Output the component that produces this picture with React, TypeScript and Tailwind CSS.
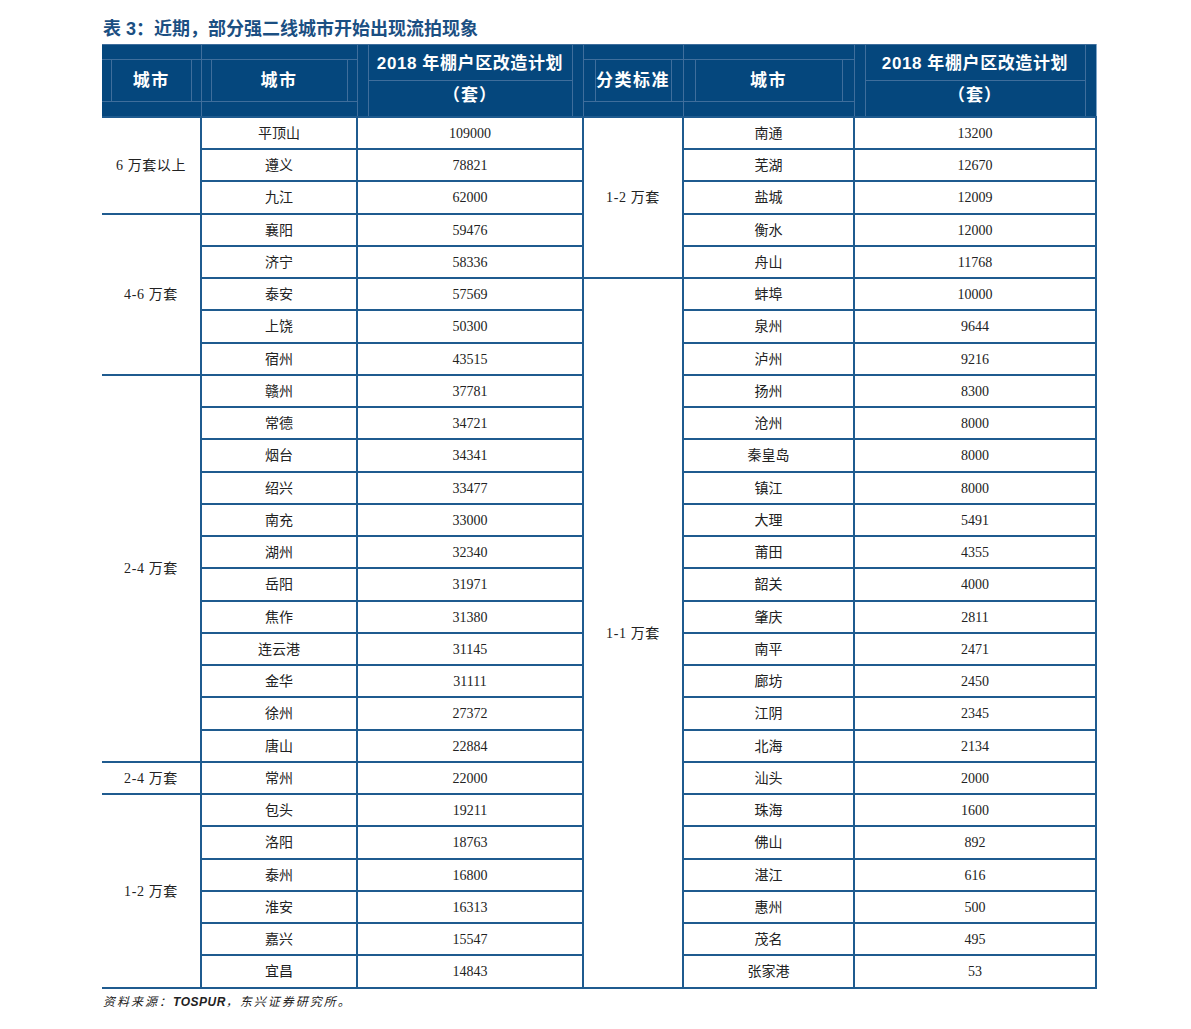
const leftRows: [string, string][] = [
  ["平顶山", "109000"], ["遵义", "78821"], ["九江", "62000"], ["襄阳", "59476"],
  ["济宁", "58336"], ["泰安", "57569"], ["上饶", "50300"], ["宿州", "43515"],
  ["赣州", "37781"], ["常德", "34721"], ["烟台", "34341"], ["绍兴", "33477"],
  ["南充", "33000"], ["湖州", "32340"], ["岳阳", "31971"], ["焦作", "31380"],
  ["连云港", "31145"], ["金华", "31111"], ["徐州", "27372"], ["唐山", "22884"],
  ["常州", "22000"], ["包头", "19211"], ["洛阳", "18763"], ["泰州", "16800"],
  ["淮安", "16313"], ["嘉兴", "15547"], ["宜昌", "14843"],
];

const rightRows: [string, string][] = [
  ["南通", "13200"], ["芜湖", "12670"], ["盐城", "12009"], ["衡水", "12000"],
  ["舟山", "11768"], ["蚌埠", "10000"], ["泉州", "9644"], ["泸州", "9216"],
  ["扬州", "8300"], ["沧州", "8000"], ["秦皇岛", "8000"], ["镇江", "8000"],
  ["大理", "5491"], ["莆田", "4355"], ["韶关", "4000"], ["肇庆", "2811"],
  ["南平", "2471"], ["廊坊", "2450"], ["江阴", "2345"], ["北海", "2134"],
  ["汕头", "2000"], ["珠海", "1600"], ["佛山", "892"], ["湛江", "616"],
  ["惠州", "500"], ["茂名", "495"], ["张家港", "53"],
];

type Group = { label: string; start: number; span: number };

const leftGroups: Group[] = [
  { label: "6 万套以上", start: 0, span: 3 },
  { label: "4-6 万套", start: 3, span: 5 },
  { label: "2-4 万套", start: 8, span: 12 },
  { label: "2-4 万套", start: 20, span: 1 },
  { label: "1-2 万套", start: 21, span: 6 },
];

const midGroups: Group[] = [
  { label: "1-2 万套", start: 0, span: 5 },
  { label: "1-1 万套", start: 5, span: 22 },
];

const line = "border-[#3f6e9c]";

const CityHead = ({ text, side = "w-[10px]" }: { text: string; side?: string }) => (
  <div className="flex h-[71px] flex-col">
    <div className={`h-[15px] border-b ${line}`} />
    <div className="flex flex-1">
      <div className={`${side} border-r ${line}`} />
      <div className="flex flex-1 items-center justify-center tracking-[1.5px]">{text}</div>
      <div className={`${side} border-l ${line}`} />
    </div>
    <div className={`h-[15px] border-t ${line}`} />
  </div>
);

const PlanHead = () => (
  <div className="flex h-[71px]">
    <div className={`w-[11px] border-r ${line}`} />
    <div className="flex flex-1 flex-col">
      <div className={`flex h-[36px] items-center justify-center border-b ${line} pt-[3px] tracking-[0.6px]`}>
        2018 年棚户区改造计划
      </div>
      <div className="flex flex-1 justify-center pt-[3px] leading-[24px] tracking-[1px]">（套）</div>
    </div>
    <div className={`w-[11px] border-l ${line}`} />
  </div>
);

const cell = "border-2 border-[#1f5b8f] p-0 text-center align-middle";

export default function App() {
  return (
    <div className="min-h-[1029px] w-[1191px] bg-white font-['Liberation_Serif','Noto_Sans_CJK_SC',serif]">
      <div className="pl-[103px] pt-[17px] font-['Liberation_Sans','Noto_Sans_CJK_SC',sans-serif] text-[18px] font-bold leading-[24px] text-[#1b4f82]">
        表 3：近期，部分强二线城市开始出现流拍现象
      </div>
      <table className="ml-[102px] mt-[3px] w-[994px] table-fixed border-collapse">
        <colgroup>
          <col className="w-[99px]" />
          <col className="w-[156px]" />
          <col className="w-[226px]" />
          <col className="w-[100px]" />
          <col className="w-[171px]" />
          <col className="w-[242px]" />
        </colgroup>
        <thead className="bg-[#05477d] font-['Liberation_Sans','Noto_Sans_CJK_SC',sans-serif] text-[17px] font-bold text-white">
          <tr>
            <th className={`border ${line} border-l-0 p-0 font-bold`}>
              <CityHead text="城市" />
            </th>
            <th className={`border ${line} p-0 font-bold`}>
              <CityHead text="城市" />
            </th>
            <th className={`border ${line} p-0 font-bold`}>
              <PlanHead />
            </th>
            <th className={`border ${line} p-0 font-bold`}>
              <CityHead text="分类标准" side="w-[12px]" />
            </th>
            <th className={`border ${line} p-0 font-bold`}>
              <CityHead text="城市" side="w-[12px]" />
            </th>
            <th className={`border ${line} border-r-[#7fa5c9] p-0 font-bold`}>
              <PlanHead />
            </th>
          </tr>
        </thead>
        <tbody className="text-[14px] text-[#222]">
          {leftRows.map((l, i) => {
            const lg = leftGroups.find((g) => g.start === i);
            const mg = midGroups.find((g) => g.start === i);
            const r = rightRows[i];
            const h = i % 4 === 2 ? "h-[33px]" : "h-[32px]";
            return (
              <tr key={i} className={h}>
                {lg && (
                  <td rowSpan={lg.span} className={`${cell} border-l-0 tracking-[0.6px]`}>
                    {lg.label}
                  </td>
                )}
                <td className={cell}>{l[0]}</td>
                <td className={cell}>{l[1]}</td>
                {mg && (
                  <td rowSpan={mg.span} className={`${cell} tracking-[0.6px]`}>
                    {mg.label}
                  </td>
                )}
                <td className={cell}>{r[0]}</td>
                <td className={cell}>{r[1]}</td>
              </tr>
            );
          })}
        </tbody>
      </table>
      <div className="pl-[103px] pt-[4px] text-[12px] italic leading-[18px] tracking-[2px] text-[#222] font-['Liberation_Sans','Noto_Sans_CJK_SC',sans-serif]">
        资料来源：<span className="font-bold tracking-[0.5px]">TOSPUR</span>，东兴证券研究所。
      </div>
    </div>
  );
}
